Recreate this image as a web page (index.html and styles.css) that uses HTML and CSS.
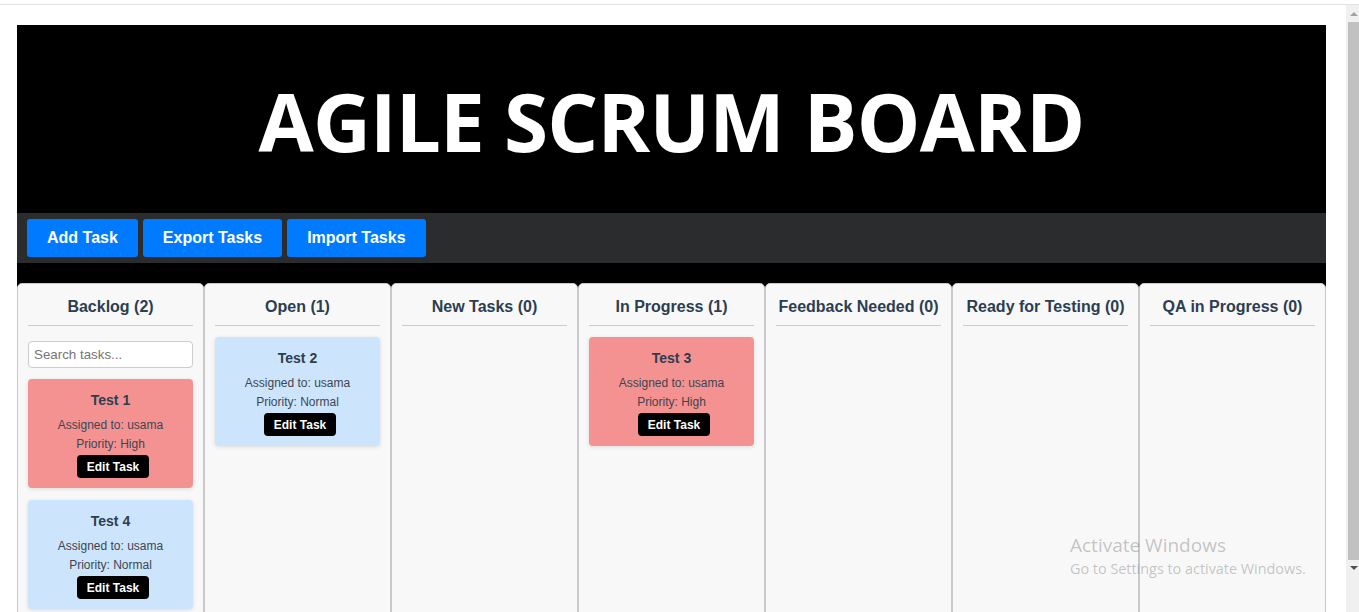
FILE: index.html
```html
<!DOCTYPE html>
<html lang="en">
<head>
<meta charset="utf-8">
<title>Agile Scrum Board</title>
<link rel="stylesheet" href="styles.css">
</head>
<body>
<div class="topbar"></div>
<div class="window">
  <main class="page">
    <div class="board">
      <header class="title-bar"><h1 class="title">AGILE SCRUM BOARD</h1></header>
      <div class="toolbar">
        <button class="btn">Add Task</button>
        <button class="btn">Export Tasks</button>
        <button class="btn">Import Tasks</button>
      </div>
      <div class="columns">
        <section class="column">
          <h3 class="col-title">Backlog (2)</h3>
          <input class="search" type="text" placeholder="Search tasks...">
          <div class="card high">
            <h4 class="card-title">Test 1</h4>
            <p class="card-line">Assigned to: usama</p>
            <p class="card-line">Priority: High</p>
            <button class="edit">Edit Task</button>
          </div>
          <div class="card normal">
            <h4 class="card-title">Test 4</h4>
            <p class="card-line">Assigned to: usama</p>
            <p class="card-line">Priority: Normal</p>
            <button class="edit">Edit Task</button>
          </div>
        </section>
        <section class="column">
          <h3 class="col-title">Open (1)</h3>
          <div class="card normal">
            <h4 class="card-title">Test 2</h4>
            <p class="card-line">Assigned to: usama</p>
            <p class="card-line">Priority: Normal</p>
            <button class="edit">Edit Task</button>
          </div>
        </section>
        <section class="column">
          <h3 class="col-title">New Tasks (0)</h3>
        </section>
        <section class="column">
          <h3 class="col-title">In Progress (1)</h3>
          <div class="card high">
            <h4 class="card-title">Test 3</h4>
            <p class="card-line">Assigned to: usama</p>
            <p class="card-line">Priority: High</p>
            <button class="edit">Edit Task</button>
          </div>
        </section>
        <section class="column">
          <h3 class="col-title">Feedback Needed (0)</h3>
        </section>
        <section class="column">
          <h3 class="col-title">Ready for Testing (0)</h3>
        </section>
        <section class="column">
          <h3 class="col-title">QA in Progress (0)</h3>
        </section>
      </div>
    </div>
  </main>
  <div class="scrollbar">
    <div class="arrow up"></div>
    <div class="thumb"></div>
    <div class="arrow down"></div>
  </div>
</div>
<div class="watermark">
  <div class="wm-title">Activate Windows</div>
  <div class="wm-sub">Go to Settings to activate Windows.</div>
</div>
</body>
</html>
```

FILE: styles.css
```css
html, body {
  margin: 0;
  padding: 0;
  height: 612px;
  overflow: hidden;
  background: #ffffff;
  font-family: "Liberation Sans", Arial, sans-serif;
}

.topbar {
  height: 4px;
  border-bottom: 1px solid #e2e2e2;
}

.window {
  display: flex;
  height: 607px;
}

.page {
  flex: 1;
  padding: 20px 20px 0 17px;
  overflow: hidden;
}

.board {
  background: #000000;
}

.title-bar {
  height: 188px;
  box-sizing: border-box;
  padding-top: 41px;
  text-align: center;
}

.title {
  margin: 0;
  color: #ffffff;
  font-family: "Open Sans", "Noto Sans", sans-serif;
  font-weight: 700;
  font-size: 80px;
  letter-spacing: -0.8px;
  line-height: normal;
}

.toolbar {
  display: flex;
  gap: 5px;
  height: 50px;
  box-sizing: border-box;
  padding: 6px 10px;
  background: #2b2c2e;
}

.btn {
  height: 38px;
  padding: 0 20px;
  border: none;
  border-radius: 3px;
  background: #007bff;
  color: #ffffff;
  font-family: "Liberation Sans", Arial, sans-serif;
  font-weight: 700;
  font-size: 16px;
}

.columns {
  display: flex;
  padding-top: 20px;
}

.column {
  flex: 0 0 187px;
  box-sizing: border-box;
  height: 360px;
  padding: 10px;
  background: #f8f8f8;
  border: 1px solid #c9c9c9;
  border-radius: 5px;
}

.col-title {
  margin: 0 0 11px;
  padding: 4px 0 9px;
  border-bottom: 1px solid #cccccc;
  color: #2c3e50;
  font-size: 16px;
  line-height: 18px;
  font-weight: 700;
  text-align: center;
  white-space: nowrap;
}

.search {
  display: block;
  box-sizing: border-box;
  width: 100%;
  height: 27px;
  margin: 15px 0 11px;
  padding: 0 5px;
  border: 1px solid #cccccc;
  border-radius: 4px;
  background: #ffffff;
  font-family: "Liberation Sans", Arial, sans-serif;
  font-size: 13.33px;
}

.search::placeholder {
  color: #757575;
}

.card {
  padding: 13px 10px 10px;
  margin-bottom: 12px;
  border-radius: 4px;
  text-align: center;
  box-shadow: 0 1px 4px rgba(0, 0, 0, 0.12);
}

.card.high {
  background: #f49292;
}

.card.normal {
  background: #cce5fc;
}

.card-title {
  margin: 0 0 8px;
  color: #2c3e50;
  font-size: 14px;
  line-height: 16px;
  font-weight: 700;
}

.card-line {
  margin: 0;
  color: #3d4550;
  font-size: 12px;
  line-height: 18.5px;
}

.edit {
  margin: 2px 0 0 5px;
  height: 23px;
  padding: 0 10px;
  border: none;
  border-radius: 4px;
  background: #000000;
  color: #ffffff;
  font-family: "Liberation Sans", Arial, sans-serif;
  font-weight: 700;
  font-size: 12px;
}

.scrollbar {
  flex: 0 0 13px;
  display: flex;
  flex-direction: column;
  background: #f0f0f0;
}

.arrow {
  flex: 0 0 17px;
  position: relative;
}

.arrow::after {
  content: "";
  position: absolute;
  left: 4px;
  width: 0;
  height: 0;
  border-left: 4px solid transparent;
  border-right: 4px solid transparent;
}

.arrow.up::after {
  top: 7px;
  border-bottom: 4px solid #a3a3a3;
}

.arrow.down::after {
  top: 6px;
  border-top: 4px solid #505050;
}

.thumb {
  height: 538px;
  margin-left: 2px;
  background: #c1c1c1;
}

.watermark {
  position: absolute;
  left: 1070px;
  top: 532px;
  color: rgba(120, 120, 120, 0.42);
  font-family: "Open Sans", "Noto Sans", sans-serif;
  pointer-events: none;
}

.wm-title {
  font-size: 19px;
  line-height: 27px;
}

.wm-sub {
  font-size: 14.4px;
  line-height: 20px;
}
```
